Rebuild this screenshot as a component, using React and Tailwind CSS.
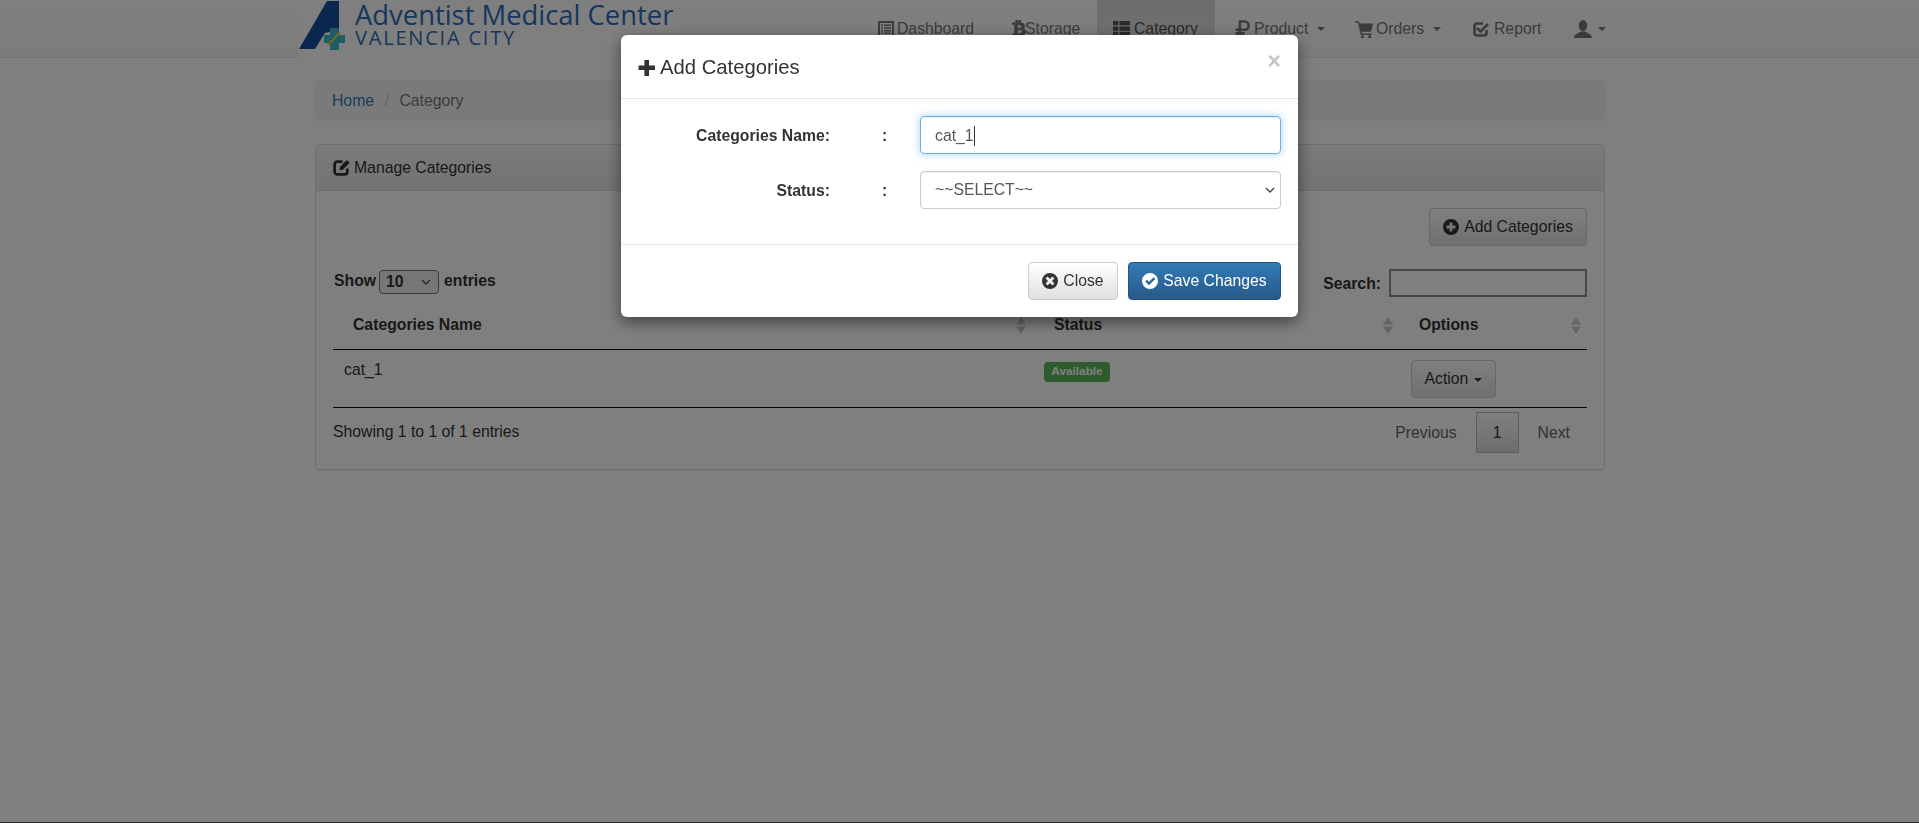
import React from "react";
import { FaBtc } from "react-icons/fa";

const Caret = () => <span className="inline-block w-0 h-0 ml-[6px] border-x-[4px] border-x-transparent border-t-[4px] border-t-current align-middle" />;

const Sort = () => (
  <svg width="10" height="17" viewBox="0 0 10 17" className="shrink-0">
    <path d="M5 0 L10 7.5 L0 7.5 Z M0 9.5 L10 9.5 L5 17 Z" fill="#cbcbcb" />
  </svg>
);

const Svg = ({ s = 16, w, children }) => (
  <svg width={w || s} height={s} viewBox="0 0 16 16" fill="currentColor" className="shrink-0">{children}</svg>
);

const ListAlt = () => (
  <Svg s={16}>
    <path fillRule="evenodd" d="M1 0h14a1 1 0 0 1 1 1v14a1 1 0 0 1-1 1H1a1 1 0 0 1-1-1V1a1 1 0 0 1 1-1zM2 2v12h12V2z" />
    <path d="M3 3.5h2v1.6H3zM6 3.5h7v1.6H6zM3 6.2h2v1.6H3zM6 6.2h7v1.6H6zM3 8.9h2v1.6H3zM6 8.9h7v1.6H6zM3 11.4h2V13H3zM6 11.4h7V13H6z" />
  </Svg>
);
const ThList = () => (
  <Svg s={17}>
    <path d="M0 1h5v4H0zM6 1h10v4H6zM0 6h5v4H0zM6 6h10v4H6zM0 11h5v4H0zM6 11h10v4H6z" />
  </Svg>
);
const Ruble = () => (
  <Svg s={17}>
    <path d="M5.5 0.5V16M5.5 1.5H10a3.6 3.6 0 0 1 0 7.6H1.5M1.5 12.6H10" fill="none" stroke="currentColor" strokeWidth="2.4" />
  </Svg>
);
const Cart = () => (
  <Svg s={18}>
    <path d="M0 1h3.4l.7 2H16l-1.6 7.5H6.2l.3 1.4H15v1.4H5.2L2.6 2.5H0z" />
    <circle cx="6.5" cy="15" r="1.4" />
    <circle cx="13" cy="15" r="1.4" />
  </Svg>
);
const Check = () => (
  <Svg s={16}>
    <path d="M13.5 9v3a2.5 2.5 0 0 1-2.5 2.5H4A2.5 2.5 0 0 1 1.5 12V5A2.5 2.5 0 0 1 4 2.5h6" fill="none" stroke="currentColor" strokeWidth="2.6" />
    <path d="M4 7 L7.5 10.5 L15 3" fill="none" stroke="currentColor" strokeWidth="2.6" />
  </Svg>
);
const Edit = () => (
  <Svg s={17}>
    <path d="M13.5 9v3a2.5 2.5 0 0 1-2.5 2.5H4A2.5 2.5 0 0 1 1.5 12V5A2.5 2.5 0 0 1 4 2.5h5" fill="none" stroke="currentColor" strokeWidth="2.6" />
    <path d="M6 10.5 L6.7 7.2 L13 1 L15.7 3.6 L9.3 10 Z" />
  </Svg>
);
const UserI = () => (
  <Svg s={18}>
    <ellipse cx="8" cy="5" rx="3.7" ry="5" />
    <path d="M0 16C0 12.6 3.6 12 6 10.2h4C12.4 12 16 12.6 16 16z" />
  </Svg>
);
const Plus = () => (
  <Svg s={17}><path d="M6 1h4.4v5H16v4.4h-5.6V16H6v-5.6H0.5V6H6z" /></Svg>
);
const PlusSign = () => (
  <Svg s={16}><path fillRule="evenodd" d="M8 0a8 8 0 1 1 0 16A8 8 0 0 1 8 0zM6.6 3.5v3.1H3.5v2.8h3.1v3.1h2.8V9.4h3.1V6.6H9.4V3.5z" /></Svg>
);
const RemoveSign = () => (
  <Svg s={16}><path fillRule="evenodd" d="M8 0a8 8 0 1 1 0 16A8 8 0 0 1 8 0zM5.6 3.6L3.6 5.6 6 8l-2.4 2.4 2 2L8 10l2.4 2.4 2-2L10 8l2.4-2.4-2-2L8 6z" /></Svg>
);
const OkSign = () => (
  <Svg s={16}><path fillRule="evenodd" d="M8 0a8 8 0 1 1 0 16A8 8 0 0 1 8 0zM11.6 4.2L7 8.8 5 6.8 3.3 8.5 7 12.2l6.3-6.3z" /></Svg>
);
const Chevron = ({ cls }) => (
  <svg width="10" height="6" viewBox="0 0 10 6" className={`absolute top-1/2 -translate-y-1/2 pointer-events-none ${cls}`}>
    <path d="M1 1 L5 5 L9 1" fill="none" stroke="#444" strokeWidth="1.3" />
  </svg>
);

const NavItem = ({ icon, label, caret, active, w, pl = "pl-[17px]", gap = "gap-[3px]" }) => (
  <div className={`flex items-center h-[57px] ${w} ${pl} ${gap} ${active ? "bg-gradient-to-b from-[#dbdbdb] to-[#e2e2e2] text-[#555]" : "text-[#777]"}`}>
    {icon}
    {label && <span>{label}</span>}
    {caret && <Caret />}
  </div>
);

const Logo = () => (
  <div className="flex items-start w-[378px] h-[58px] bg-white">
    <svg width="58" height="50" viewBox="0 0 58 50" className="shrink-0">
      <path d="M1 49 L29 1 L41 1 L41 30 L27 33 L17 49 Z" fill="#14509f" />
      <path d="M32 28 H41 V35 H47 V43 H41 V50 H32 V43 H26 V35 H32 Z" fill="#36bccd" />
      <path d="M30 45 C33 42 34 41 36 39 C38 37 38 35 42 33" stroke="#f2cd3c" strokeWidth="2" fill="none" />
    </svg>
    <div className="flex flex-col font-['Open_Sans',sans-serif] text-[#2f6cb8] -ml-px">
      <span className="text-[27.4px] leading-[30px] whitespace-nowrap">Adventist Medical Center</span>
      <span className="text-[20px] leading-[16px] tracking-[1.8px] whitespace-nowrap">VALENCIA CITY</span>
    </div>
  </div>
);

const Th = ({ children, cls }) => (
  <th className={`p-0 font-bold text-left ${cls}`}>
    <div className="flex items-center justify-between h-[52px] pt-[4px]">
      <span>{children}</span>
      <Sort />
    </div>
  </th>
);

export default function App() {
  return (
    <div className="relative min-h-[823px] flex flex-col bg-white font-['Liberation_Sans',Arial,sans-serif] text-[15.75px] leading-[22px] text-[#333]">
      <header className="h-[58px] border-b border-[#e7e7e7] bg-gradient-to-b from-white to-[#f8f8f8]">
        <div className="flex justify-between pl-[298px] pr-[297px]">
          <Logo />
          <nav className="flex">
            <NavItem w="w-[132px]" icon={<ListAlt />} label="Dashboard" />
            <NavItem w="w-[104px]" gap="gap-0" icon={<span className="w-[15px]"><FaBtc size={18} stroke="currentColor" strokeWidth="20" /></span>} label="Storage" />
            <NavItem w="w-[118px]" pl="pl-[16px]" gap="gap-[4px]" active icon={<ThList />} label="Category" />
            <NavItem w="w-[124px]" pl="pl-[19px]" gap="gap-[3px]" icon={<Ruble />} label="Product" caret />
            <NavItem w="w-[117px]" pl="pl-[16px]" gap="gap-[3px]" icon={<Cart />} label="Orders" caret />
            <NavItem w="w-[102px]" icon={<Check />} gap="gap-[5px]" label="Report" />
            <NavItem w="w-[64px]" pl="pl-[16px]" gap="gap-0" icon={<UserI />} caret />
          </nav>
        </div>
      </header>

      <main className="flex-1 w-[1290px] ml-[315px]">
        <div className="mt-[22px] h-[41px] rounded-[4px] bg-[#f5f5f5] flex items-center px-[17px] pt-px">
          <span className="text-[#337ab7]">Home</span>
          <span className="text-[#ccc] px-[10.5px]">/</span>
          <span className="text-[#777]">Category</span>
        </div>

        <section className="mt-[23px] border border-[#ddd] rounded-[4px] shadow-[0_1px_1px_rgba(0,0,0,0.05)]">
          <div className="h-[46px] flex items-center gap-[4px] pl-[17px] bg-gradient-to-b from-[#f5f5f5] to-[#e8e8e8] border-b border-[#ddd] rounded-t-[4px]">
            <Edit />
            <span>Manage Categories</span>
          </div>
          <div className="px-[17px] pb-[16px] pt-[17px]">
            <div className="flex justify-end">
              <button className="h-[38px] w-[158px] flex items-center justify-center gap-[5px] rounded-[4px] border border-[#ccc] bg-gradient-to-b from-white to-[#e0e0e0] text-[#333]">
                <PlusSign />Add Categories
              </button>
            </div>
            <div className="flex justify-between items-center mt-[23px] h-[28px] font-bold">
              <div className="flex items-center pl-px pb-[4px]">
                <span>Show</span>
                <div className="relative w-[60px] h-[24px] ml-[3px] mr-[5px] mt-[2px]">
                  <select className="appearance-none w-full h-full border border-[#767676] rounded-[4px] bg-[#efefef] pl-[6px] font-bold text-[15.75px]">
                    <option>10</option>
                  </select>
                  <Chevron cls="right-[8px]" />
                </div>
                <span>entries</span>
              </div>
              <div className="flex items-center gap-[8px]">
                <span className="pt-[2px]">Search:</span>
                <input className="w-[198px] h-[28px] border-2 border-[#8f8f8f] bg-white" />
              </div>
            </div>
            <table className="w-full table-fixed border-collapse">
              <colgroup>
                <col className="w-[700px]" />
                <col className="w-[367px]" />
                <col className="w-[187px]" />
              </colgroup>
              <thead>
                <tr className="border-b border-[#111]">
                  <Th cls="pl-[20px] pr-[7px]">Categories Name</Th>
                  <Th cls="pl-[21px] pr-[7px]">Status</Th>
                  <Th cls="pl-[19px] pr-[6px]">Options</Th>
                </tr>
              </thead>
              <tbody>
                <tr className="border-b border-[#111] align-top h-[58px]">
                  <td className="pl-[11px] pt-[9px]">cat_1</td>
                  <td className="pl-[11px] pt-[12px]">
                    <span className="flex items-center justify-center w-[66px] h-[20px] rounded-[4px] bg-[#5cb85c] text-white font-bold text-[11.8px] leading-none">Available</span>
                  </td>
                  <td className="pl-[11px] pt-[10px]">
                    <button className="h-[38px] w-[85px] rounded-[4px] border border-[#ccc] bg-gradient-to-b from-white to-[#e0e0e0]">Action<Caret /></button>
                  </td>
                </tr>
              </tbody>
            </table>
            <div className="flex justify-between items-start mt-[4px]">
              <span className="mt-[9px]">Showing 1 to 1 of 1 entries</span>
              <div className="flex items-center h-[41px] text-[#666]">
                <span className="pr-[19px]">Previous</span>
                <span className="w-[43px] h-[41px] flex items-center justify-center border border-[#bbb] bg-gradient-to-b from-white to-[#dcdcdc] text-[#333]">1</span>
                <span className="pl-[19px] pr-[17px]">Next</span>
              </div>
            </div>
          </div>
        </section>
      </main>
      <footer className="h-px bg-[#555]" />

      <div className="fixed inset-0 bg-black/50" />
      <div className="fixed inset-0 flex justify-center items-start pt-[35px]">
        <div className="w-[677px] h-[282px] rounded-[6px] bg-white shadow-[0_5px_15px_rgba(0,0,0,0.5)] flex flex-col">
          <div className="h-[64px] shrink-0 border-b border-[#e5e5e5] relative flex items-center pl-[17px] pt-[1px] gap-[5px] text-[20.25px] text-[#333]">
            <Plus />
            <span>Add Categories</span>
            <span className="absolute right-[17px] top-[15px] font-bold text-[#c6c6c6] text-[23px] leading-none">×</span>
          </div>
          <div className="h-[146px] shrink-0 border-b border-[#e5e5e5] pt-[17px] pl-[17px] pr-[17px]">
            <div className="grid grid-cols-[192px_1fr] gap-y-[17px]">
              <div className="h-[38px] flex items-center justify-end font-bold pt-[2px]">Categories Name:</div>
              <div className="h-[38px] flex items-center">
                <span className="w-[90px] pl-[52px] font-bold pt-[2px]">:</span>
                <div className="w-[361px] h-[38px] rounded-[4px] border border-[#66afe9] shadow-[inset_0_1px_1px_rgba(0,0,0,0.075),0_0_8px_rgba(102,175,233,0.6)] flex items-center pl-[14px] pt-px text-[#555]">
                  cat_1<span className="w-px h-[20px] bg-[#333]" />
                </div>
              </div>
              <div className="h-[38px] flex items-center justify-end font-bold pt-[2px]">Status:</div>
              <div className="h-[38px] flex items-center">
                <span className="w-[90px] pl-[52px] font-bold pt-[2px]">:</span>
                <div className="relative w-[361px] h-[38px]">
                  <select className="appearance-none w-full h-full rounded-[4px] border border-[#ccc] bg-white pl-[14px] text-[#555] shadow-[inset_0_1px_1px_rgba(0,0,0,0.075)]">
                    <option>~~SELECT~~</option>
                  </select>
                  <Chevron cls="right-[6px]" />
                </div>
              </div>
            </div>
          </div>
          <div className="flex justify-end gap-[10px] pt-[17px] pr-[17px]">
            <button className="h-[38px] w-[90px] flex items-center justify-center gap-[5px] rounded-[4px] border border-[#ccc] bg-gradient-to-b from-white to-[#e0e0e0] text-[#333]">
              <RemoveSign />Close
            </button>
            <button className="h-[38px] w-[153px] flex items-center justify-center gap-[5px] rounded-[4px] border border-[#245580] bg-gradient-to-b from-[#337ab7] to-[#265a88] text-white">
              <OkSign />Save Changes
            </button>
          </div>
        </div>
      </div>
    </div>
  );
}
